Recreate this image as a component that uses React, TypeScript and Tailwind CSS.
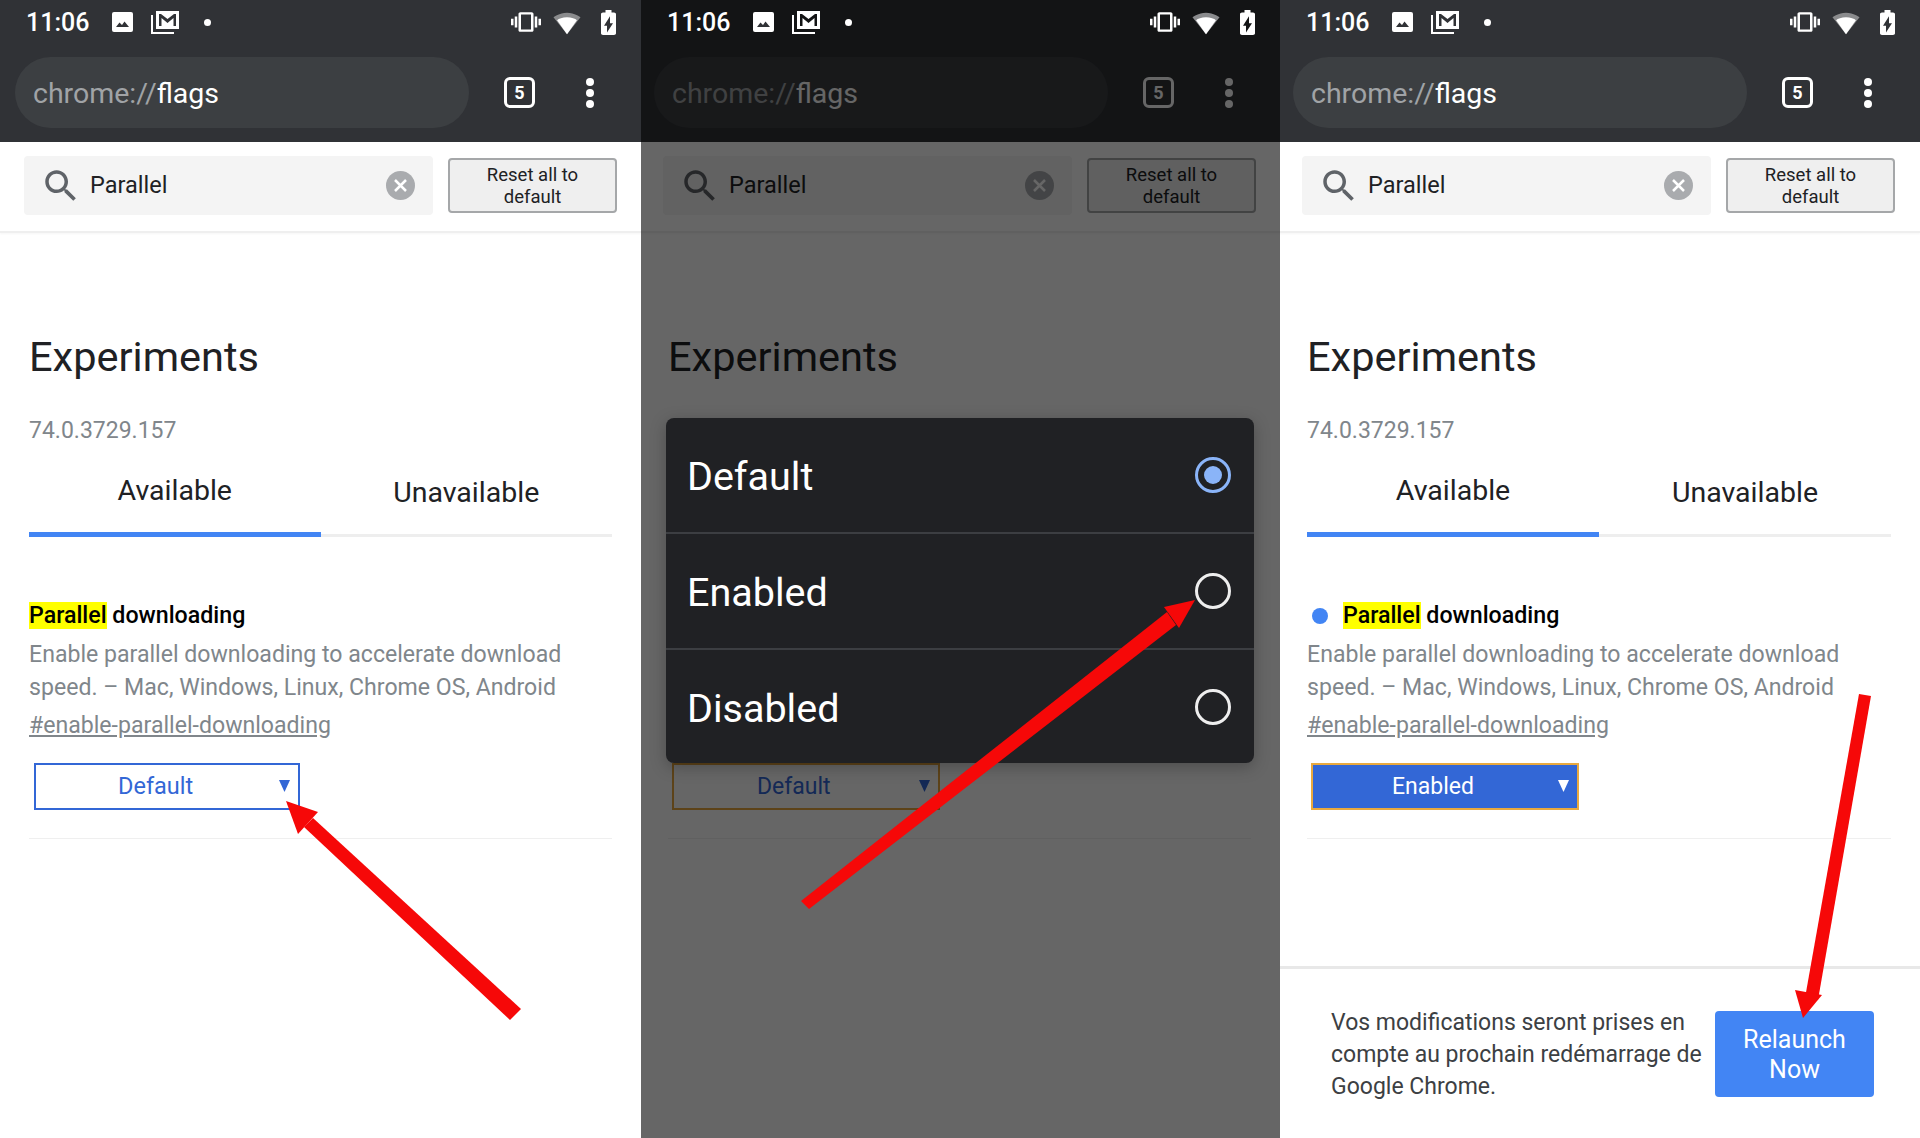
type Variant = 'default' | 'dimmed' | 'enabled';

const StatusIcons = () => (
  <div className="flex h-[44px] items-center pl-[26px] text-white">
    <span className="w-[86px] text-[25px] font-medium leading-none">11:06</span>
    {/* image */}
    <svg width="21" height="20" viewBox="0 0 21 20">
      <rect width="21" height="20" rx="2" fill="#fff" />
      <path d="M4 15l3.500-4.500 2.500 2.500 2.500-3.500 4.500 5.500z" fill="#303236" />
    </svg>
    {/* gmail stack */}
    <svg className="ml-[18px]" width="28" height="23" viewBox="0 0 28 23">
      <path d="M1 4v18h22" fill="none" stroke="#fff" strokeWidth="2" />
      <path fillRule="evenodd" d="M5 0h23v18H5zM8 3v12h2.500V7l6 5 6-5v8H25V3h-2l-6.500 5L10 3z" fill="#fff" />
    </svg>
    <span className="ml-[25px] size-[7px] rounded-full bg-white" />
    <div className="ml-auto flex items-center pr-[25px]">
      <svg width="30" height="26" viewBox="0 0 24 24" fill="#fff" preserveAspectRatio="none">
        <path d="M0 15h2V9H0v6zm3 2h2V7H3v10zm19-8v6h2V9h-2zm-3 8h2V7h-2v10zM16.500 3h-9C6.670 3 6 3.670 6 4.500v15c0 .83.67 1.500 1.500 1.500h9c.83 0 1.500-.67 1.500-1.500v-15c0-.83-.67-1.500-1.500-1.500zM16 19H8V5h8v14z" />
      </svg>
      <svg className="ml-[12px]" width="28" height="26" viewBox="0 0 24 22">
        <path d="M12 21.500L23.600 7C23.200 6.700 18.700 3 12 3S.8 6.700.4 7z" fill="#8a8b8d" />
        <path d="M3.500 9.500L12 21.500l8.500-12C19 8.300 16 7 12 7S5 8.300 3.500 9.500z" fill="#fff" />
      </svg>
      <svg className="ml-[20px]" width="15" height="25" viewBox="7 2 10 20" preserveAspectRatio="none">
        <path d="M15.670 4H14V2h-4v2H8.330C7.600 4 7 4.600 7 5.330v15.330C7 21.400 7.600 22 8.330 22h7.330c.74 0 1.340-.6 1.340-1.330V5.330C17 4.600 16.400 4 15.670 4zM11 20v-5.500H9L13 7v5.500h2L11 20z" fill="#fff" />
      </svg>
    </div>
  </div>
);

const AddressBar = () => (
  <div className="flex items-center pl-[15px] pt-[13px]">
    <div className="flex h-[71px] w-[454px] items-center rounded-full bg-[#3c3f42] pl-[18px] pt-[3px] text-[28.5px] leading-none">
      <span className="text-[#a0a3a6]">chrome://</span>
      <span className="text-white">flags</span>
    </div>
    <div className="ml-[35px] flex h-[31px] w-[31px] items-center justify-center rounded-[6px] border-[3px] border-white text-[18px] font-bold text-white">
      5
    </div>
    <div className="ml-[51px] flex flex-col gap-[3px]">
      <span className="size-[8px] rounded-full bg-white" />
      <span className="size-[8px] rounded-full bg-white" />
      <span className="size-[8px] rounded-full bg-white" />
    </div>
  </div>
);

const SearchRow = () => (
  <div className="flex h-[91px] items-center border-b-2 border-[#efefef] pb-[2px] pl-[24px] shadow-[0_1px_2px_rgba(0,0,0,0.04)]">
    <div className="flex h-[59px] w-[409px] items-center rounded-[4px] bg-[#f4f4f4] pl-[16px]">
      <svg width="42" height="42" viewBox="0 0 24 24" fill="#5f6368">
        <path d="M15.500 14h-.79l-.28-.27C15.410 12.590 16 11.110 16 9.500 16 5.910 13.090 3 9.500 3S3 5.910 3 9.500 5.910 16 9.500 16c1.610 0 3.090-.59 4.230-1.570l.27.28v.79l5 4.990L20.490 19l-4.990-5zm-6 0C7.010 14 5 11.990 5 9.500S7.010 5 9.500 5 14 7.010 14 9.500 11.990 14 9.500 14z" />
      </svg>
      <span className="ml-[8px] pt-[1px] text-[23.5px] leading-none text-[#202124]">Parallel</span>
      <div className="ml-auto mr-[18px] flex size-[29px] items-center justify-center rounded-full bg-[#a9abae]">
        <svg width="15" height="15" viewBox="0 0 15 15">
          <path d="M2 2l11 11M13 2L2 13" stroke="#fff" strokeWidth="2.500" />
        </svg>
      </div>
    </div>
    <div className="ml-[15px] flex h-[55px] w-[169px] items-center justify-center rounded-[4px] border-2 border-[#a5a7a9] bg-[#efefef] text-center text-[18.5px] leading-[22px] text-[#202124]">
      Reset all to
      <br />
      default
    </div>
  </div>
);

const Tabs = () => (
  <div className="mt-[27px] grid grid-cols-2">
    <div className="flex h-[64px] items-start justify-center border-b-[5px] border-[#4285f4] pt-[3px] text-[28.5px] leading-[30px] text-[#202124]">
      Available
    </div>
    <div className="flex h-[64px] items-start justify-center border-b-[3px] border-[#eeeeee] pt-[5px] text-[28.5px] leading-[30px] text-[#202124]">
      Unavailable
    </div>
  </div>
);

const Flag = ({ variant }: { variant: Variant }) => {
  const enabled = variant === 'enabled';
  return (
    <div className="border-b border-[#efefef] pb-[28px] pt-[65px]">
      <div className="flex h-[27px] items-center text-[23.2px] font-medium leading-[27px] text-black">
        {enabled && <span className="ml-[5px] mr-[15px] size-[16px] rounded-full bg-[#4285f4]" />}
        <span className="bg-[#ffff00]">Parallel</span>
        <span>&nbsp;downloading</span>
      </div>
      <p className="mt-[9px] text-[23.1px] leading-[33px] text-[#80868b]">
        Enable parallel downloading to accelerate download
        <br />
        speed. – Mac, Windows, Linux, Chrome OS, Android
      </p>
      <p className="mt-[5px] text-[23.1px] leading-[34px] text-[#80868b] underline">
        #enable-parallel-downloading
      </p>
      <div
        className={
          enabled
            ? 'relative ml-[4px] mt-[20px] flex h-[47px] w-[268px] items-center border-2 border-[#e9a93f] bg-[#3367d6] pl-[79px] pt-[1px] text-[23px] text-white'
            : variant === 'dimmed'
              ? 'relative ml-[4px] mt-[20px] flex h-[47px] w-[268px] items-center border-2 border-[#e9a93f] pl-[83px] pt-[1px] text-[23px] text-[#3367d6]'
              : 'relative ml-[5px] mt-[20px] flex h-[47px] w-[266px] items-center border-2 border-[#3367d6] pl-[82px] pt-[1px] text-[23.5px] text-[#3367d6]'
        }
      >
        {enabled ? 'Enabled' : 'Default'}
        <svg className="absolute right-[8px] top-[15px]" width="11" height="12" viewBox="0 0 11 12">
          <path d="M0 0h11L5.500 12z" fill={enabled ? '#fff' : '#3367d6'} />
        </svg>
      </div>
    </div>
  );
};

const Dialog = () => (
  <div className="absolute left-[25px] top-[418px] w-[588px] rounded-[8px] bg-[#202124] shadow-[0_4px_16px_rgba(0,0,0,0.25)]">
    {['Default', 'Enabled', 'Disabled'].map((label, i) => (
      <div
        key={label}
        className={
          i < 2
            ? 'flex h-[116px] items-center justify-between border-b-2 border-[#3c3e42] pl-[21px] pr-[23px] text-[39.5px] leading-none text-white'
            : 'flex h-[113px] items-center justify-between pl-[21px] pr-[23px] text-[39.5px] leading-none text-white'
        }
      >
        <span className="pt-[4px]">{label}</span>
        {i === 0 ? (
          <span className="flex size-[36px] items-center justify-center rounded-full border-[3px] border-[#8ab4f8]">
            <span className="size-[18px] rounded-full bg-[#8ab4f8]" />
          </span>
        ) : (
          <span className="size-[36px] rounded-full border-[3px] border-[#eeeeee]" />
        )}
      </div>
    ))}
  </div>
);

const RelaunchBar = () => (
  <div className="mt-auto flex h-[172px] border-t-[3px] border-[#e8e8e8] pl-[51px] pt-[38px]">
    <p className="w-[384px] text-[23px] leading-[32px] text-[#3c4043]">
      Vos modifications seront prises en
      <br />
      compte au prochain redémarrage de
      <br />
      Google Chrome.
    </p>
    <div className="mt-[4px] h-[86px] w-[159px] rounded-[4px] bg-[#4285f4] pt-[14px] text-center text-[25px] leading-[30px] text-white">
      Relaunch
      <br />
      Now
    </div>
  </div>
);

// the red annotation arrows, drawn in panel coordinates
const Arrow = ({ shaft, head }: { shaft: string; head: string }) => (
  <svg className="pointer-events-none absolute inset-0 z-20" width="640" height="1138">
    <polygon points={shaft} fill="#f60808" />
    <polygon points={head} fill="#f60808" />
  </svg>
);

const Panel = ({ variant }: { variant: Variant }) => {
  // the three shots are not quite aligned: the last two sit 2px further left
  const shift = variant === 'default' ? '' : '-ml-[2px]';
  return (
    <div className="relative flex h-[1138px] flex-col overflow-hidden bg-white" style={{ fontFamily: 'Roboto, sans-serif' }}>
      <div className="h-[142px] bg-[#303236]">
        <div className={variant === 'dimmed' ? 'relative z-10' : ''}>
          <StatusIcons />
        </div>
        <div className={shift}>
          <AddressBar />
        </div>
      </div>
      <div className={shift}>
        <SearchRow />
        <div className="px-[29px]">
          <h1 className="mt-[96px] text-[41.5px] font-normal leading-[56px] text-[#202124]">Experiments</h1>
          <div className="mt-[31px] text-[23px] leading-[30px] text-[#80868b]">74.0.3729.157</div>
          <Tabs />
          <Flag variant={variant} />
        </div>
      </div>
      {variant === 'enabled' && <RelaunchBar />}
      {variant === 'dimmed' && <div className="absolute inset-0 bg-black/60" />}
      {variant === 'dimmed' && <Dialog />}
      {variant === 'default' && (
        <Arrow shaft="304,827 313,818 521,1009 510,1020" head="286,801 318,812 298,834" />
      )}
      {variant === 'dimmed' && (
        <Arrow shaft="160,901 168,909 535,625 526,612" head="554,600 523,607 538,628" />
      )}
      {variant === 'enabled' && (
        <Arrow shaft="579,694 591,696 538,1000 525,998" head="523,1018 515,990 542,995" />
      )}
    </div>
  );
};

export default function App() {
  return (
    <div className="grid h-[1138px] w-[1920px] grid-cols-[641px_639px_640px] overflow-hidden">
      <Panel variant="default" />
      <Panel variant="dimmed" />
      <Panel variant="enabled" />
    </div>
  );
}
